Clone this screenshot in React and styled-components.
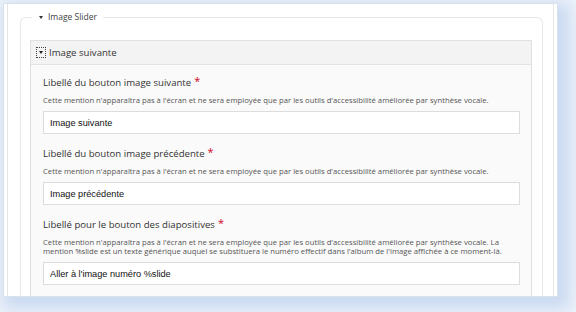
import React from "react";
import styled, { createGlobalStyle } from "styled-components";

const GlobalStyle = createGlobalStyle`
	html, body {
		margin: 0;
		padding: 0;
		background: #ffffff;
	}
	body {
		width: 576px;
		height: 312px;
		overflow: hidden;
		font-family: "Open Sans", "Noto Sans", sans-serif;
		color: #333333;
	}
`;

const Page = styled.div`
	width: 576px;
	height: 312px;
	padding: 3px 0 0 3px;
	box-sizing: border-box;
	background: #eef3fa;
`;

const Card = styled.div`
	width: 555px;
	height: 294px;
	box-sizing: border-box;
	background: #ffffff;
	border: 1px solid #d9e1ec;
	box-shadow: 6px 6px 14px 6px rgba(196, 214, 240, 0.85);
	padding: 0 3px;
	overflow: hidden;
`;

const Scroller = styled.div`
	height: 100%;
	box-sizing: border-box;
	border-left: 1px solid #e6e6e6;
	border-right: 1px solid #e6e6e6;
	padding: 7px 10px 0 12px;
`;

const Fieldset = styled.fieldset`
	margin: 0;
	padding: 0 10px 0 9px;
	border: 1px solid #e8e8e8;
	border-bottom: none;
	border-radius: 6px 6px 0 0;
	min-width: 0;
`;

const Legend = styled.legend`
	margin-left: 2px;
	padding: 0 6px 0 7px;
	font-size: 8.5px;
	line-height: 12px;
	color: #444444;
	display: flex;
	align-items: center;
	gap: 5px;
`;

const Caret = styled.span`
	width: 0;
	height: 0;
	border-left: 2.5px solid transparent;
	border-right: 2.5px solid transparent;
	border-top: 3px solid #333333;
`;

const Panel = styled.div`
	margin-top: 17px;
	border: 1px solid #e0e0e0;
	border-bottom: none;
	background: #fafafa;
`;

const PanelHeader = styled.div`
	height: 23px;
	background: #f3f3f3;
	border-bottom: 1px solid #e3e3e3;
	display: flex;
	align-items: center;
	padding-left: 5px;
	gap: 3px;
	font-size: 9.6px;
	color: #333333;
`;

const Toggle = styled.span`
	width: 8px;
	height: 9px;
	border: 1px dotted #444444;
	display: flex;
	align-items: center;
	justify-content: center;
	&::after {
		content: "";
		border-left: 2.5px solid transparent;
		border-right: 2.5px solid transparent;
		border-top: 3px solid #222222;
	}
`;

const PanelBody = styled.div`
	padding: 11px 11px 20px 12px;
	display: flex;
	flex-direction: column;
`;

const Field = styled.div`
	display: flex;
	flex-direction: column;
	margin-bottom: 13px;
`;

const Label = styled.label`
	font-size: 9.6px;
	line-height: 14px;
	color: #333333;
`;

const Star = styled.span`
	color: #d0021b;
	font-size: 11px;
	margin-left: 3px;
	vertical-align: top;
	line-height: 10px;
`;

const Help = styled.p`
	margin: 6px 0 6px;
	font-size: 7.7px;
	line-height: 9px;
	color: #555555;
`;

const Input = styled.input`
	height: 23px;
	box-sizing: border-box;
	border: 1px solid #dddddd;
	background: #ffffff;
	padding: 0 6px;
	font-family: "Liberation Sans", Arial, sans-serif;
	font-size: 9.2px;
	color: #111111;
	outline: none;
`;

const fields = [
	{
		label: "Libellé du bouton image suivante",
		help: "Cette mention n'apparaîtra pas à l'écran et ne sera employée que par les outils d'accessibilité améliorée par synthèse vocale.",
		value: "Image suivante",
	},
	{
		label: "Libellé du bouton image précédente",
		help: "Cette mention n'apparaîtra pas à l'écran et ne sera employée que par les outils d'accessibilité améliorée par synthèse vocale.",
		value: "Image précédente",
	},
	{
		label: "Libellé pour le bouton des diapositives",
		help: "Cette mention n'apparaîtra pas à l'écran et ne sera employée que par les outils d'accessibilité améliorée par synthèse vocale. La mention %slide est un texte générique auquel se substituera le numéro effectif dans l'album de l'image affichée à ce moment-là.",
		value: "Aller à l'image numéro %slide",
	},
];

function App() {
	return (
		<>
			<GlobalStyle />
			<Page>
				<Card>
					<Scroller>
						<Fieldset>
							<Legend>
								<Caret />
								Image Slider
							</Legend>
							<Panel>
								<PanelHeader>
									<Toggle />
									Image suivante
								</PanelHeader>
								<PanelBody>
									{fields.map((f, i) => (
										<Field key={i}>
											<Label>
												{f.label}
												<Star>*</Star>
											</Label>
											<Help>{f.help}</Help>
											<Input type="text" defaultValue={f.value} />
										</Field>
									))}
								</PanelBody>
							</Panel>
						</Fieldset>
					</Scroller>
				</Card>
			</Page>
		</>
	);
}

export default App;
